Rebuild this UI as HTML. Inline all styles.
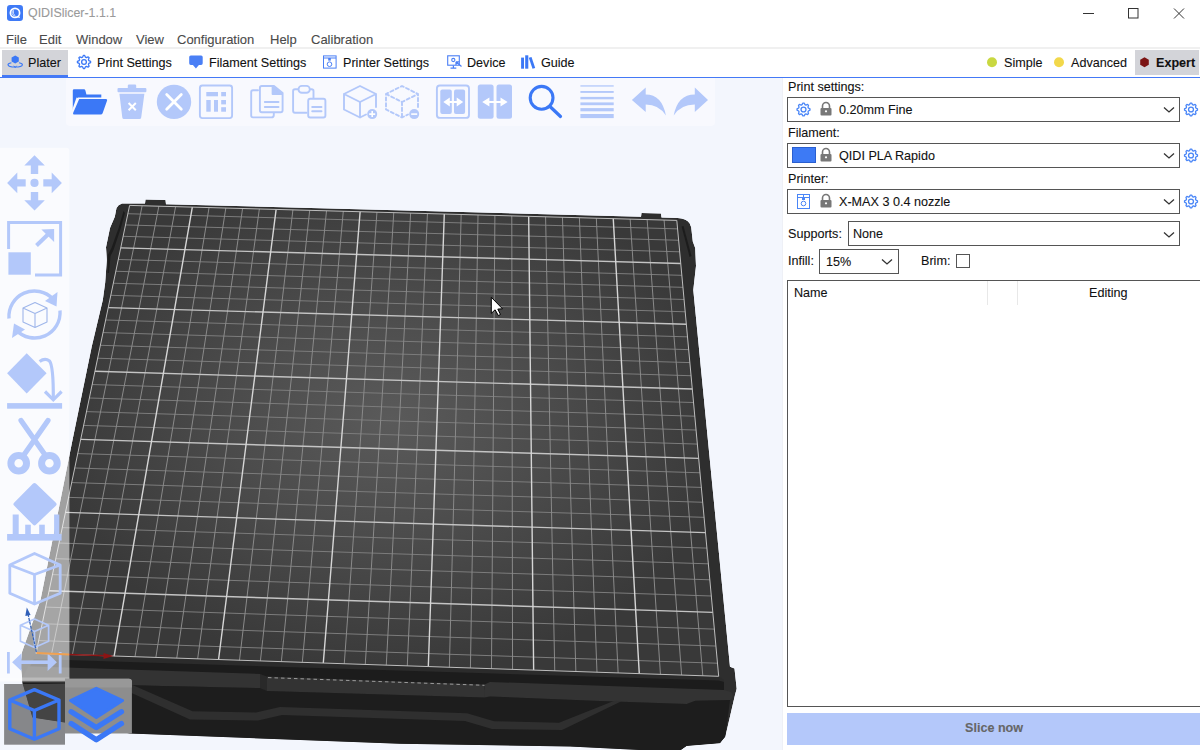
<!DOCTYPE html>
<html><head><meta charset="utf-8">
<style>
*{box-sizing:border-box;margin:0;padding:0}
html,body{width:1200px;height:750px;overflow:hidden;background:#fff;font-family:"Liberation Sans",sans-serif;font-size:12.6px;color:#111}
.a{position:absolute;white-space:nowrap;line-height:1;-webkit-text-stroke:0.1px currentColor}
#canvas{position:absolute;left:0;top:78px;width:782px;height:672px;background:#f3f6fd;overflow:hidden}
#scene{position:absolute;left:0;top:0}
.menu{color:#4a4a4a;font-size:13px}
</style></head><body>
<!-- title bar -->
<svg class="a" style="left:7px;top:5px" width="16" height="16" viewBox="0 0 16 16"><rect width="16" height="16" rx="3.2" fill="#3f7af6"/><circle cx="8" cy="7.9" r="4.6" fill="none" stroke="#fff" stroke-width="1.7"/><path d="M5.2,5.5 Q4.2,9 7,11.5 M6.3,4.8 Q5.6,8.5 8.5,11.8" fill="none" stroke="#fff" stroke-width="0.9" opacity="0.8"/><path d="M9.5,11.5 L12.8,12.3" stroke="#fff" stroke-width="1.2"/></svg>
<div class="a" style="left:28px;top:7px;color:#9a9a9a;font-size:12.4px">QIDISlicer-1.1.1</div>
<svg class="a" style="left:1078px;top:4px" width="120" height="20"><path d="M5 9.5H16" stroke="#333" stroke-width="1"/><rect x="50.5" y="4.5" width="9.5" height="9.5" fill="none" stroke="#333"/><path d="M96 4.5L106 14.5M106 4.5L96 14.5" stroke="#333" stroke-width="1"/></svg>
<!-- menu -->
<div class="a menu" style="left:6px;top:33px">File</div>
<div class="a menu" style="left:39px;top:33px">Edit</div>
<div class="a menu" style="left:76px;top:33px">Window</div>
<div class="a menu" style="left:136px;top:33px">View</div>
<div class="a menu" style="left:177px;top:33px">Configuration</div>
<div class="a menu" style="left:270px;top:33px">Help</div>
<div class="a menu" style="left:311px;top:33px">Calibration</div>
<div class="a" style="left:0;top:47px;width:1200px;height:2px;background:#f0f0f0"></div>
<!-- tabs -->
<div class="a" style="left:2px;top:50px;width:66px;height:25px;background:#d3d4d9"></div>
<div class="a" style="left:2px;top:75px;width:66px;height:2px;background:#4479f6"></div>
<div class="a" style="left:0;top:77px;width:1200px;height:1px;background:#4479f6"></div>
<svg class="a" style="left:0;top:0" width="600" height="78"><polygon points="15.2,55.6 18.8,57.6 18.8,61.6 15.2,63.6 11.6,61.6 11.6,57.6" fill="#3b78f6"/><path d="M11.4,62.8 Q7.8,63.6 8,64.8 Q8.5,67 15.2,67 Q21.9,67 22.4,64.8 Q22.6,63.6 19,62.8" fill="none" stroke="#3b78f6" stroke-width="1.1"/><path d="M13.8,65.8 L15.2,67.6 L16.6,65.8" fill="none" stroke="#3b78f6" stroke-width="1"/><path d="M90.57,61.35 L90.57,62.65 L88.80,63.46 L88.42,64.36 L89.10,66.19 L88.19,67.10 L86.36,66.42 L85.46,66.80 L84.65,68.57 L83.35,68.57 L82.54,66.80 L81.64,66.42 L79.81,67.10 L78.90,66.19 L79.58,64.36 L79.20,63.46 L77.43,62.65 L77.43,61.35 L79.20,60.54 L79.58,59.64 L78.90,57.81 L79.81,56.90 L81.64,57.58 L82.54,57.20 L83.35,55.43 L84.65,55.43 L85.46,57.20 L86.36,57.58 L88.19,56.90 L89.10,57.81 L88.42,59.64 L88.80,60.54Z" fill="none" stroke="#3b78f6" stroke-width="1.3" stroke-linejoin="round"/><circle cx="84" cy="62" r="2.38" fill="none" stroke="#3b78f6" stroke-width="1.3"/><path d="M190.8,55.4 H201.1 Q202.7,55.4 202.7,57 V63.3 Q202.7,64.9 201.1,64.9 H198.9 L195.9,68.4 L192.9,64.9 H190.8 Q189.2,64.9 189.2,63.3 V57 Q189.2,55.4 190.8,55.4 Z" fill="#4a7ff5"/><rect x="323.5" y="55.9" width="12.6" height="12.2" fill="none" stroke="#4a7ff5" stroke-width="1"/><path d="M323.5,58 H336" stroke="#4a7ff5" stroke-width="1"/><rect x="328.2" y="58" width="2.6" height="2.6" fill="#4a7ff5"/><circle cx="329.5" cy="64.2" r="2.3" fill="none" stroke="#4a7ff5" stroke-width="1"/><rect x="447.7" y="55.8" width="11.6" height="9.4" fill="none" stroke="#4a7ff5" stroke-width="1.1"/><path d="M450.5,68.2 H456.3 M453.4,65.5 V68" stroke="#4a7ff5" stroke-width="1.2"/><circle cx="453.3" cy="60" r="1.6" fill="none" stroke="#4a7ff5" stroke-width="1.1"/><path d="M456,61.8 L461.5,66.5 M456,61.8 V65 M456,61.8 H459.2" stroke="#4a7ff5" stroke-width="1.2" fill="none"/><rect x="521.1" y="57.6" width="2.9" height="11.1" fill="#3b78f6"/><rect x="525.2" y="55.3" width="3.1" height="13.4" fill="#3b78f6"/><path d="M528.8,57.8 L531.5,57 L535.2,68 L532.5,68.8 Z" fill="#3b78f6"/></svg>
<div class="a" style="left:28px;top:57px">Plater</div>
<div class="a" style="left:97px;top:57px">Print Settings</div>
<div class="a" style="left:209px;top:57px">Filament Settings</div>
<div class="a" style="left:343px;top:57px">Printer Settings</div>
<div class="a" style="left:467px;top:57px">Device</div>
<div class="a" style="left:541px;top:57px">Guide</div>
<div class="a" style="left:1135px;top:50px;width:64px;height:25px;background:#d3d4d9"></div>
<svg class="a" style="left:985px;top:55px" width="170" height="16"><circle cx="7" cy="7.3" r="5" fill="#c9d841"/><circle cx="74" cy="7.3" r="5" fill="#f2d84a"/><polygon points="159.5,2.3 163.8,4.8 163.8,9.8 159.5,12.3 155.2,9.8 155.2,4.8" fill="#7c1414"/></svg>
<div class="a" style="left:1004px;top:57px">Simple</div>
<div class="a" style="left:1071px;top:57px">Advanced</div>
<div class="a" style="left:1156px;top:57px;font-weight:bold">Expert</div>
<!-- canvas -->
<div id="canvas">
<svg id="scene" width="782" height="672" viewBox="0 78 782 672">
<!-- frame silhouette -->
<defs><clipPath id="fclip"><path d="M102.8,300 L105.2,282.4 L106.8,260 L106,247.2 L110,228 L114.8,216.8 L116.5,208 Q118,204.5 122,203.4 L145,203.6 L145.5,199.6 L165.5,200.1 L166,204.2 L641,216.8 L641.5,213 L661,213.5 L661.5,217.6 L677.6,218 Q686,218.5 689.6,223.2 L691.2,227.2 L692.8,241.6 L695.2,248 L696,266 L693.3,290 L730,666.7 L734.5,668.5 L736.7,688.7 L735,695 L725.3,736.7 L720,743.3 L686.7,746 L681,750 L640,750 L570,746.6 L400,743.7 L130,733.5 L64.7,722.4 L32.4,717.5 L22.8,684 L20.5,664 L22,652 L40.5,600 L72.5,440 L91.7,346.7 Z"/></clipPath></defs>
<g clip-path="url(#fclip)">
<path d="M102.8,300 L105.2,282.4 L106.8,260 L106,247.2 L110,228 L114.8,216.8 L116.5,208 Q118,204.5 122,203.4 L145,203.6 L145.5,199.6 L165.5,200.1 L166,204.2 L641,216.8 L641.5,213 L661,213.5 L661.5,217.6 L677.6,218 Q686,218.5 689.6,223.2 L691.2,227.2 L692.8,241.6 L695.2,248 L696,266 L693.3,290 L730,666.7 L734.5,668.5 L736.7,688.7 L735,695 L725.3,736.7 L720,743.3 L686.7,746 L681,750 L640,750 L570,746.6 L400,743.7 L130,733.5 L64.7,722.4 L32.4,717.5 L22.8,684 L20.5,664 L22,652 L40.5,600 L72.5,440 L91.7,346.7 Z" fill="#2e2e2e"/>
<path d="M123.5,211 L125,213 L120.5,229 L113.5,250 L110.5,256 L109,273 L107.6,273 L107.8,255 L111.5,248 L118.6,228 Z" fill="#1c1c1c"/>
<path d="M681.6,226.4 L683.5,226 L691.5,256 L689.6,257 Z" fill="#1c1c1c"/>
<!-- front lip dark band -->
<path d="M36,653.4 L718.7,676.3 L724,680 L724,682 L30,660 Z" fill="#2b2b2b"/>
<path d="M34,659 L718.7,680.5 L724,682 L724,692 L20,685 Z" fill="#1c1c1c"/>
<!-- medium band top of front face -->
<path d="M28,666.3 L260,674 L260,688 L20,683 Z" fill="#333"/>
<path d="M260,674 L267,676.5 L267,691 L260,688 Z" fill="#292929"/>
<path d="M267,676.5 L484.5,684.5 L484.5,697.5 L267,691 Z" fill="#333"/>
<path d="M484.5,684.5 L490,682 L724,690 L731,692 Q735,696 730,700 L695.3,700.7 L686.7,704 L600,701 L490,696.5 L484.5,697.5 Z" fill="#333"/>
<!-- lower base -->
<path d="M20,683 L260,688 L267,691 L484.5,697.5 L490,696.5 L600,701 L686.7,704 L695.3,700.7 L730,700 L725.3,736.7 L720,743.3 L686.7,746 L681,750 L0,750 L0,735 Z" fill="#1d1d1d"/>
<!-- diagonal strip -->
<path d="M132.5,685 L192.5,711.3 L256,712.5 L280,707 L467,713.3 L494,721.2 L559,722.8 L614.3,700.7 L622,701 L562,730 L492,729 L465,721 L282,715 L258,720.5 L190,719.5 L125,690 Z" fill="#2f2f2f"/>
<!-- dashed line -->
<path d="M268,677.6 L484.5,685.3" stroke="#c8c8c8" stroke-width="0.7" stroke-dasharray="3.5 3" fill="none"/>
</g>


<defs>
<radialGradient id="bedg" gradientUnits="userSpaceOnUse" cx="390" cy="420" r="340" gradientTransform="translate(0,105) scale(1,0.75)">
<stop offset="0" stop-color="#5a5a5a"/><stop offset="0.45" stop-color="#4c4c4c"/><stop offset="1" stop-color="#393939"/>
</radialGradient>
</defs>
<polygon points="129.60,205.40 676.80,220.40 718.70,676.30 36.00,653.40" fill="url(#bedg)"/>
<path d="M38.68,640.58L717.50,663.23M42.20,623.72L715.92,646.04M45.67,607.10L714.36,629.11M52.46,574.60L711.32,595.99M55.78,558.70L709.83,579.79M59.06,543.04L708.36,563.84M62.28,527.60L706.92,548.11M68.60,497.37L704.09,517.33M71.69,482.58L702.71,502.27M74.74,467.99L701.34,487.42M77.74,453.60L699.99,472.77M83.63,425.42L697.36,444.09M86.52,411.62L696.07,430.04M89.36,398.00L694.79,416.19M92.17,384.56L693.54,402.52M97.67,358.22L691.08,375.73M100.37,345.31L689.87,362.60M103.03,332.57L688.68,349.64M105.66,319.99L687.50,336.85M110.81,295.32L685.20,311.77M113.34,283.22L684.07,299.47M115.84,271.27L682.95,287.33M118.30,259.48L681.85,275.34M123.14,236.32L679.69,251.81M125.51,224.95L678.63,240.26M127.86,213.73L677.58,228.86" stroke="#7c7c7c" stroke-width="1" fill="none"/>
<path d="M51.61,653.92L142.14,205.74M72.44,654.62L158.86,206.20M93.28,655.32L175.59,206.66M134.99,656.72L209.07,207.58M155.87,657.42L225.82,208.04M176.76,658.12L242.58,208.50M197.65,658.82L259.35,208.96M239.49,660.23L292.91,209.88M260.42,660.93L309.70,210.34M281.37,661.63L326.50,210.80M302.32,662.33L343.31,211.26M344.28,663.74L376.94,212.18M365.27,664.44L393.77,212.64M386.28,665.15L410.61,213.10M407.29,665.85L427.45,213.56M449.37,667.27L461.16,214.49M470.42,667.97L478.03,214.95M491.48,668.68L494.90,215.41M512.56,669.39L511.79,215.88M554.75,670.80L545.58,216.80M575.87,671.51L562.48,217.27M596.99,672.22L579.40,217.73M618.13,672.93L596.32,218.19M660.44,674.35L630.18,219.12M681.62,675.06L647.13,219.59M702.80,675.77L664.08,220.05" stroke="#8a8a8a" stroke-width="1" fill="none"/>
<path d="M49.09,590.73L712.83,612.42M65.46,512.38L705.49,532.61M80.71,439.41L698.67,458.33M94.94,371.30L692.30,389.03M108.25,307.58L686.34,324.23M120.74,247.83L680.76,263.50" stroke="#c4c4c4" stroke-width="1.4" fill="none"/>
<path d="M114.13,656.02L192.33,207.12M218.56,659.52L276.13,209.42M323.29,663.04L360.12,211.72M428.32,666.56L444.30,214.03M533.65,670.09L528.68,216.34M639.28,673.64L613.25,218.66" stroke="#d6d6d6" stroke-width="1.4" fill="none"/>
<polygon points="129.60,205.40 676.80,220.40 718.70,676.30 36.00,653.40" fill="none" stroke="#bdbdbd" stroke-width="1"/>

<path d="M491.3,297.3 l0,16 l3.8,-3.5 l3.2,5.7 l2.2,-1 l-2.7,-5.4 l4.7,-0.3 Z" fill="#fff" stroke="#000" stroke-width="1" stroke-linejoin="round"/>
<path d="M69,654.5 L107,655.8" stroke="#8c1414" stroke-width="1.6"/><path d="M103.5,653 L113.5,656.1 L103.5,659 Z" fill="#8c1414"/>
</svg>
<svg class="a" style="left:0;top:0" width="782" height="672" viewBox="0 78 782 672">
<path d="M66,78 H715 V122 Q715,126 711,126 H70 Q66,126 66,122 Z" fill="#f8f9fe"/>
<!-- folder -->
<path d="M72.8,113 V90.6 Q72.8,89.3 74.1,89.3 H84 Q85,89.3 85.4,90.4 L86.4,94.5 H101.3 V97.5 H78 Z" fill="#3b78f6"/>
<path d="M77.6,97.8 L72,113.5" stroke="#f8f9fe" stroke-width="2.2"/>
<path d="M79.2,99 H106 Q107.6,99 107.1,100.6 L102.6,113.2 Q102.1,114.6 100.6,114.6 H74.2 Q72.6,114.6 73.1,113 Z" fill="#3b78f6"/>
<g fill="#b3c8fa">
<!-- trash -->
<rect x="127.8" y="84.6" width="8.4" height="4.2" rx="1.2"/>
<rect x="117.5" y="88" width="28.9" height="4.2" rx="1"/>
<path d="M119.4,93.8 H144.4 L141.2,117.5 Q141,119 139.5,119 H124 Q122.5,119 122.3,117.5 Z"/>
<!-- circle x -->
<circle cx="174" cy="101.9" r="17.2"/>
<!-- split objs inner -->
<rect x="440.3" y="89.4" width="11.5" height="24.7" rx="2"/>
<rect x="454" y="89.4" width="11.1" height="24.7" rx="2"/>
<rect x="477.8" y="84.6" width="15.8" height="34.2" rx="2.5"/>
<rect x="496.5" y="84.6" width="15.5" height="34.2" rx="2.5"/>
<!-- grid inner -->
<rect x="206.3" y="92" width="11.7" height="4.3"/>
<rect x="221.2" y="92" width="4.8" height="4.3"/>
<rect x="221.2" y="100" width="4.8" height="4.4"/>
<rect x="221.2" y="107.2" width="4.8" height="4.5"/>
<rect x="206.3" y="100" width="4.4" height="11.7"/>
<rect x="214" y="100" width="4" height="11.7"/>
<!-- layers lines -->
<rect x="580.4" y="85.3" width="33.3" height="1.3"/>
<rect x="580.4" y="91" width="33.3" height="1.9"/>
<rect x="580.4" y="96.9" width="33.3" height="2.4"/>
<rect x="580.4" y="102.4" width="33.3" height="2.8"/>
<rect x="580.4" y="108.1" width="33.3" height="3.2"/>
<rect x="580.4" y="114" width="33.3" height="4.1"/>
<!-- undo / redo -->
<path d="M631.9,100 L645.7,87.6 V94.5 Q662,94.5 665.9,115.6 Q659,104.6 645.7,104.6 V112 Z"/>
<path d="M708,100 L694.8,87.6 V94.5 Q677.6,94.5 673.7,115.6 Q680.6,104.6 694.8,104.6 V112 Z"/>
<!-- circle plus/minus -->
<circle cx="372.2" cy="114.1" r="5"/>
<circle cx="414.2" cy="114.1" r="5"/>
</g>
<g fill="none" stroke="#b3c8fa" stroke-width="1.9" stroke-linejoin="round" stroke-linecap="round">
<rect x="199.9" y="85.5" width="32.2" height="32.6" rx="2.5"/>
<rect x="436.9" y="85.5" width="32.1" height="32.4" rx="3"/>
<!-- copy -->
<path d="M258,90.3 H253 Q251.2,90.3 251.2,92.1 V115.6 Q251.2,117.4 253,117.4 H271.5 Q273.8,117.4 273.8,115 V113"/>
<path d="M272.6,94 V86.8 L282,94 Z" fill="#b3c8fa"/><path d="M261.8,86 H274 L282.6,93 V110.3 Q282.6,112.2 280.7,112.2 H261.8 Q259.9,112.2 259.9,110.3 V87.9 Q259.9,86 261.8,86 Z"/>
<path d="M264.8,102 H278.5 M264.8,107 H278.5"/>
<!-- paste -->
<path d="M297.5,89.2 H295 Q293.1,89.2 293.1,91.1 V110.8 Q293.1,112.7 295,112.7 H306.5 M310.8,89.2 H311.6 Q313.5,89.2 313.5,91.1 V97.8"/>
<rect x="298.5" y="85.9" width="11.3" height="6.9" rx="3.4"/>
<rect x="308.2" y="98.7" width="17.2" height="18.8" rx="2"/>
<path d="M312.2,107 H321.5 M312.2,111.2 H321.5"/>
<!-- cube + -->
<path d="M376,107 V94 L360,86 L344,94 V109.5 L360,117.5 L366,114.5 M344,94 L360,102 L376,94 M360,102 V117.5"/>
<!-- dashed cube -->
<path d="M418,107 V94 L402,86 L386,94 V109.5 L402,117.5 L408,114.5 M386,94 L402,102 L418,94 M402,102 V117.5" stroke-dasharray="3.2 2.6"/>
</g>
<path d="M181.3,94.6 L166.7,109.2 M166.7,94.6 L181.3,109.2" transform="translate(0,0)" stroke="#fff" stroke-width="2.8" stroke-linecap="round"/>
<path d="M128.6,103 L135.8,110.2 M135.8,103 L128.6,110.2" stroke="#fff" stroke-width="2"/>
<path d="M369.2,114.1 H375.2 M372.2,111.1 V117.1" stroke="#fff" stroke-width="1.6"/>
<path d="M411.2,114.1 H417.2" stroke="#fff" stroke-width="1.6"/>
<!-- split arrows -->
<g stroke="#fff" stroke-width="2" fill="#fff">
<path d="M448,102 H458.5" fill="none"/><path d="M443.3,102 L449.8,97.5 V106.5 Z M463.2,102 L456.7,97.5 V106.5 Z" stroke="none"/>
<path d="M488,102 H502" fill="none"/><path d="M482.2,102 L489.4,97.5 V106.5 Z M507.6,102 L500.5,97.5 V106.5 Z" stroke="none"/>
</g>
<!-- search -->
<circle cx="541.6" cy="97.8" r="11.4" fill="none" stroke="#3b78f6" stroke-width="3.1"/>
<path d="M550.5,107 L560.5,116.5" stroke="#3b78f6" stroke-width="3.2" stroke-linecap="round"/>
</svg>
<svg class="a" style="left:0;top:0" width="782" height="672" viewBox="0 78 782 672">
<path d="M0,147.8 H66.4 Q69.4,147.8 69.4,150.8 V681.5 H0 Z" fill="#fff" fill-opacity="0.55"/><rect x="0" y="677.5" width="69.4" height="3" fill="#fff" fill-opacity="0.25"/>
<g fill="#b3c8fa">
<!-- move -->
<circle cx="34.5" cy="182.9" r="4.1"/>
<path d="M34.5,155.3 L44.8,165.5 H38.2 V173.9 H30.8 V165.5 H24.3 Z"/>
<path d="M34.5,210.5 L44.8,200.3 H38.2 V191.9 H30.8 V200.3 H24.3 Z"/>
<path d="M7.1,182.9 L17.3,172.6 V179.2 H25.7 V186.6 H17.3 V193.2 Z"/>
<path d="M61.9,182.9 L51.7,172.6 V179.2 H43.3 V186.6 H51.7 V193.2 Z"/>
<!-- scale -->
<rect x="8.4" y="252.3" width="22.4" height="22.4"/>
<path d="M41.4,229.4 L54.1,229 L54.1,242 Z"/>
<!-- place on face -->
<path d="M26.7,353.3 L46.6,373.3 L26.7,393.4 L7.1,373.3 Z"/>

<rect x="7.1" y="403.1" width="55" height="5.6"/>
<!-- scissors -->
<!-- variable layer height -->
<rect x="7.1" y="534" width="54.5" height="6.6"/>
<rect x="12.7" y="514.5" width="6" height="20"/>
<rect x="25.2" y="524.7" width="5.6" height="10"/>
<rect x="39.2" y="524.7" width="5.6" height="10"/>
<rect x="54.1" y="514.5" width="5.2" height="20"/>
</g>
<path d="M34.5,481.8 L57.8,504.2 L34.5,526.6 L12.2,504.2 Z" fill="#fafbff" stroke="#fafbff" stroke-width="2" stroke-linejoin="round"/>
<path d="M34.5,485 L54.5,504.2 L34.5,523.4 L15.5,504.2 Z" fill="#b3c8fa" stroke="#b3c8fa" stroke-width="4" stroke-linejoin="round"/>
<g fill="none" stroke="#b3c8fa">
<path d="M8.6,249 V222.6 H60.6 V275 H35" stroke-width="3"/>
<path d="M36.5,245.5 L50,232.5" stroke-width="4"/>
<!-- rotate arcs -->
<path d="M9,318.5 A25.5,25.5 0 0 1 53,299" stroke-width="3.4"/>
<path d="M60,310.5 A25.5,25.5 0 0 1 16,330" stroke-width="3.4"/>
<path d="M39.6,361.5 Q45,357.5 49.5,361 Q53.5,366 53.3,399" stroke-width="3.2"/><path d="M45,391.5 L53.3,399.8 L61.6,391.5" stroke-width="3.2"/>
<!-- hex cube big -->
<path d="M34.5,553.5 L60.2,565 V593.3 L34.5,604 L9.8,593.3 V565 Z M9.8,565 L34.5,574.5 L60.2,565 M34.5,574.5 V604" stroke-width="2.8" stroke-linejoin="round"/>
<!-- small cube -->
<path d="M34.5,619 L48.6,625.2 V641.3 L34.5,647.5 L20.4,641.3 V625.2 Z M20.4,625.2 L34.5,631.5 L48.6,625.2 M34.5,631.5 V647.5" stroke-width="1.7" stroke-linejoin="round"/>
<!-- small cube center rotate -->
<path d="M35,302.5 L47,308 V322 L35,327.5 L23,322 V308 Z M23,308 L35,313.5 L47,308 M35,313.5 V327.5" stroke-width="1.1" stroke="#9fb6ea" stroke-linejoin="round"/>
<!-- bars arrow -->
<path d="M8.4,652 V673.4 M60.2,652 V673.4" stroke-width="2.8"/>
<path d="M20,662.2 H49" stroke-width="3.6"/>
</g>
<g fill="#b3c8fa">
<path d="M57.5,292 L56.5,306.5 L45,301 Z"/>
<path d="M12,338 L14,323.5 L25,329.5 Z"/>
<path d="M12.1,662.2 L21.5,653.3 V671.1 Z"/>
<path d="M56.9,662.2 L47.6,653.3 V671.1 Z"/>
</g>
<g stroke="#b3c8fa" fill="none">
<path d="M21,420.5 L45.5,455.5 M48,420.5 L23.5,455.5" stroke-width="5.2" stroke-linecap="round"/>
<circle cx="18.7" cy="463.2" r="7.8" stroke-width="7"/>
<circle cx="49.4" cy="463.2" r="7.8" stroke-width="7"/>
</g>
<path d="M36.4,653 L69,654.5" stroke="#f0a050" stroke-width="1.8"/>
<path d="M36.4,652 L28.2,615" stroke="#2f5fb8" stroke-width="1.2" stroke-dasharray="3 1"/><path d="M25.3,616 L26.8,607.5 L30.6,615 Z" fill="#2f5fb8"/>
<!-- bottom view buttons -->
<rect x="4.1" y="684" width="60.9" height="60.7" fill="rgb(85,85,85)" fill-opacity="0.69"/>
<path d="M65,678.8 H128.9 Q131.9,678.8 131.9,681.8 V733.6 H65 Z" fill="#8d8d8d"/><path d="M65,678.8 H128.9 Q131.9,678.8 131.9,681.8 V687.5 H65 Z" fill="#989898"/>
<path d="M34.4,689.6 L59,700 V728.7 L34.4,739.2 L9.8,728.7 V700 Z M9.8,700 L34.4,710.5 L59,700 M34.4,710.5 V739.2" fill="none" stroke="#3b78f6" stroke-width="3.4" stroke-linejoin="round"/>
<path d="M70.5,700.6 L96.3,688.3 L122.6,700.6 L96.3,717.6 Z" fill="#3b78f6" stroke="#3b78f6" stroke-width="3" stroke-linejoin="round"/>
<path d="M71.2,711.8 L96.3,727.5 L121.4,711.8 M71.2,723.6 L96.3,739.8 L121.4,723.6" fill="none" stroke="#3b78f6" stroke-width="5.4" stroke-linecap="round" stroke-linejoin="round"/>
</svg>


</div>
<div class="a" style="left:782px;top:78px;width:418px;height:672px;background:#fff"></div>
<div class="a" style="left:782px;top:78px;width:1px;height:672px;background:#eef0f6"></div>
<div class="a" style="left:788px;top:81px">Print settings:</div>
<div class="a" style="left:787px;top:97px;width:393px;height:25px;border:1px solid #555;background:#fff"></div>
<div class="a" style="left:839px;top:104px">0.20mm Fine</div>
<div class="a" style="left:788px;top:127px">Filament:</div>
<div class="a" style="left:787px;top:143px;width:393px;height:25px;border:1px solid #555;background:#fff"></div>
<div class="a" style="left:792px;top:147px;width:24px;height:16px;background:#3d7af5;border:1px solid #2a5fd0"></div>
<div class="a" style="left:839px;top:150px">QIDI PLA Rapido</div>
<div class="a" style="left:788px;top:173px">Printer:</div>
<div class="a" style="left:787px;top:189px;width:393px;height:25px;border:1px solid #555;background:#fff"></div>
<div class="a" style="left:839px;top:196px">X-MAX 3 0.4 nozzle</div>
<div class="a" style="left:788px;top:228px">Supports:</div>
<div class="a" style="left:848px;top:221px;width:332px;height:25px;border:1px solid #555;background:#fff"></div>
<div class="a" style="left:853px;top:228px">None</div>
<div class="a" style="left:788px;top:255px">Infill:</div>
<div class="a" style="left:819px;top:249px;width:80px;height:25px;border:1px solid #555;background:#fff"></div>
<div class="a" style="left:826px;top:256px">15%</div>
<div class="a" style="left:921px;top:255px">Brim:</div>
<div class="a" style="left:956px;top:254px;width:14px;height:14px;border:1px solid #555;background:#fff"></div>
<div class="a" style="left:787px;top:280px;width:420px;height:427px;border:1px solid #555;background:#fff"></div>
<div class="a" style="left:987px;top:281px;width:1px;height:24px;background:#e8e8e8"></div>
<div class="a" style="left:1017px;top:281px;width:1px;height:24px;background:#e8e8e8"></div>
<div class="a" style="left:794px;top:287px">Name</div>
<div class="a" style="left:1089px;top:287px">Editing</div>
<div class="a" style="left:787px;top:713px;width:413px;height:32px;background:#b4c8fa"></div>
<div class="a" style="left:965px;top:722px;font-weight:bold;color:#666">Slice now</div>
<svg class="a" style="left:787px;top:97px" width="413" height="120">
 <g fill="none" stroke="#333" stroke-width="1.3"><path d="M377 10.5l5 4.5 5-4.5"/><path d="M377 56.5l5 4.5 5-4.5"/><path d="M377 102.5l5 4.5 5-4.5"/></g>
</svg>
<svg class="a" style="left:1158px;top:228px" width="20" height="12"><path d="M6 4.5l5 4.5 5-4.5" fill="none" stroke="#333" stroke-width="1.3"/></svg>
<svg class="a" style="left:876px;top:255px" width="20" height="12"><path d="M6 4.5l5 4.5 5-4.5" fill="none" stroke="#333" stroke-width="1.3"/></svg>
<svg class="a" style="left:0;top:0;pointer-events:none" width="1200" height="750"><path d="M1197.47,108.86 L1197.47,110.14 L1195.85,110.97 L1195.47,111.89 L1196.02,113.62 L1195.12,114.52 L1193.39,113.97 L1192.47,114.35 L1191.64,115.97 L1190.36,115.97 L1189.53,114.35 L1188.61,113.97 L1186.88,114.52 L1185.98,113.62 L1186.53,111.89 L1186.15,110.97 L1184.53,110.14 L1184.53,108.86 L1186.15,108.03 L1186.53,107.11 L1185.98,105.38 L1186.88,104.48 L1188.61,105.03 L1189.53,104.65 L1190.36,103.03 L1191.64,103.03 L1192.47,104.65 L1193.39,105.03 L1195.12,104.48 L1196.02,105.38 L1195.47,107.11 L1195.85,108.03Z" fill="none" stroke="#4a86f7" stroke-width="1.3" stroke-linejoin="round"/><circle cx="1191" cy="109.5" r="2.47" fill="none" stroke="#4a86f7" stroke-width="1.3"/><path d="M1197.47,154.86 L1197.47,156.14 L1195.85,156.97 L1195.47,157.89 L1196.02,159.62 L1195.12,160.52 L1193.39,159.97 L1192.47,160.35 L1191.64,161.97 L1190.36,161.97 L1189.53,160.35 L1188.61,159.97 L1186.88,160.52 L1185.98,159.62 L1186.53,157.89 L1186.15,156.97 L1184.53,156.14 L1184.53,154.86 L1186.15,154.03 L1186.53,153.11 L1185.98,151.38 L1186.88,150.48 L1188.61,151.03 L1189.53,150.65 L1190.36,149.03 L1191.64,149.03 L1192.47,150.65 L1193.39,151.03 L1195.12,150.48 L1196.02,151.38 L1195.47,153.11 L1195.85,154.03Z" fill="none" stroke="#4a86f7" stroke-width="1.3" stroke-linejoin="round"/><circle cx="1191" cy="155.5" r="2.47" fill="none" stroke="#4a86f7" stroke-width="1.3"/><path d="M1197.47,200.86 L1197.47,202.14 L1195.85,202.97 L1195.47,203.89 L1196.02,205.62 L1195.12,206.52 L1193.39,205.97 L1192.47,206.35 L1191.64,207.97 L1190.36,207.97 L1189.53,206.35 L1188.61,205.97 L1186.88,206.52 L1185.98,205.62 L1186.53,203.89 L1186.15,202.97 L1184.53,202.14 L1184.53,200.86 L1186.15,200.03 L1186.53,199.11 L1185.98,197.38 L1186.88,196.48 L1188.61,197.03 L1189.53,196.65 L1190.36,195.03 L1191.64,195.03 L1192.47,196.65 L1193.39,197.03 L1195.12,196.48 L1196.02,197.38 L1195.47,199.11 L1195.85,200.03Z" fill="none" stroke="#4a86f7" stroke-width="1.3" stroke-linejoin="round"/><circle cx="1191" cy="201.5" r="2.47" fill="none" stroke="#4a86f7" stroke-width="1.3"/><path d="M809.97,108.86 L809.97,110.14 L808.35,110.97 L807.97,111.89 L808.52,113.62 L807.62,114.52 L805.89,113.97 L804.97,114.35 L804.14,115.97 L802.86,115.97 L802.03,114.35 L801.11,113.97 L799.38,114.52 L798.48,113.62 L799.03,111.89 L798.65,110.97 L797.03,110.14 L797.03,108.86 L798.65,108.03 L799.03,107.11 L798.48,105.38 L799.38,104.48 L801.11,105.03 L802.03,104.65 L802.86,103.03 L804.14,103.03 L804.97,104.65 L805.89,105.03 L807.62,104.48 L808.52,105.38 L807.97,107.11 L808.35,108.03Z" fill="none" stroke="#4a86f7" stroke-width="1.3" stroke-linejoin="round"/><circle cx="803.5" cy="109.5" r="2.47" fill="none" stroke="#4a86f7" stroke-width="1.3"/><path d="M822.5,108.5 v-2.5 a3.5,3.5 0 0 1 7,0 v2.5" fill="none" stroke="#777" stroke-width="1.6"/><rect x="820.5" y="108.0" width="11" height="7.5" rx="1" fill="#777"/><circle cx="826" cy="111.3" r="1.1" fill="#fff"/><path d="M822.5,154.5 v-2.5 a3.5,3.5 0 0 1 7,0 v2.5" fill="none" stroke="#777" stroke-width="1.6"/><rect x="820.5" y="154.0" width="11" height="7.5" rx="1" fill="#777"/><circle cx="826" cy="157.3" r="1.1" fill="#fff"/><path d="M822.5,200.5 v-2.5 a3.5,3.5 0 0 1 7,0 v2.5" fill="none" stroke="#777" stroke-width="1.6"/><rect x="820.5" y="200.0" width="11" height="7.5" rx="1" fill="#777"/><circle cx="826" cy="203.3" r="1.1" fill="#fff"/><rect x="797.5" y="194.5" width="12" height="14" fill="none" stroke="#4a86f7" stroke-width="1"/><path d="M797.5 197.5h12M803.5 194.5v4" stroke="#4a86f7" stroke-width="1"/><circle cx="803.5" cy="203.5" r="2.3" fill="none" stroke="#4a86f7" stroke-width="1"/><rect x="802" y="198" width="3" height="2" fill="#4a86f7"/></svg>

</body></html>
